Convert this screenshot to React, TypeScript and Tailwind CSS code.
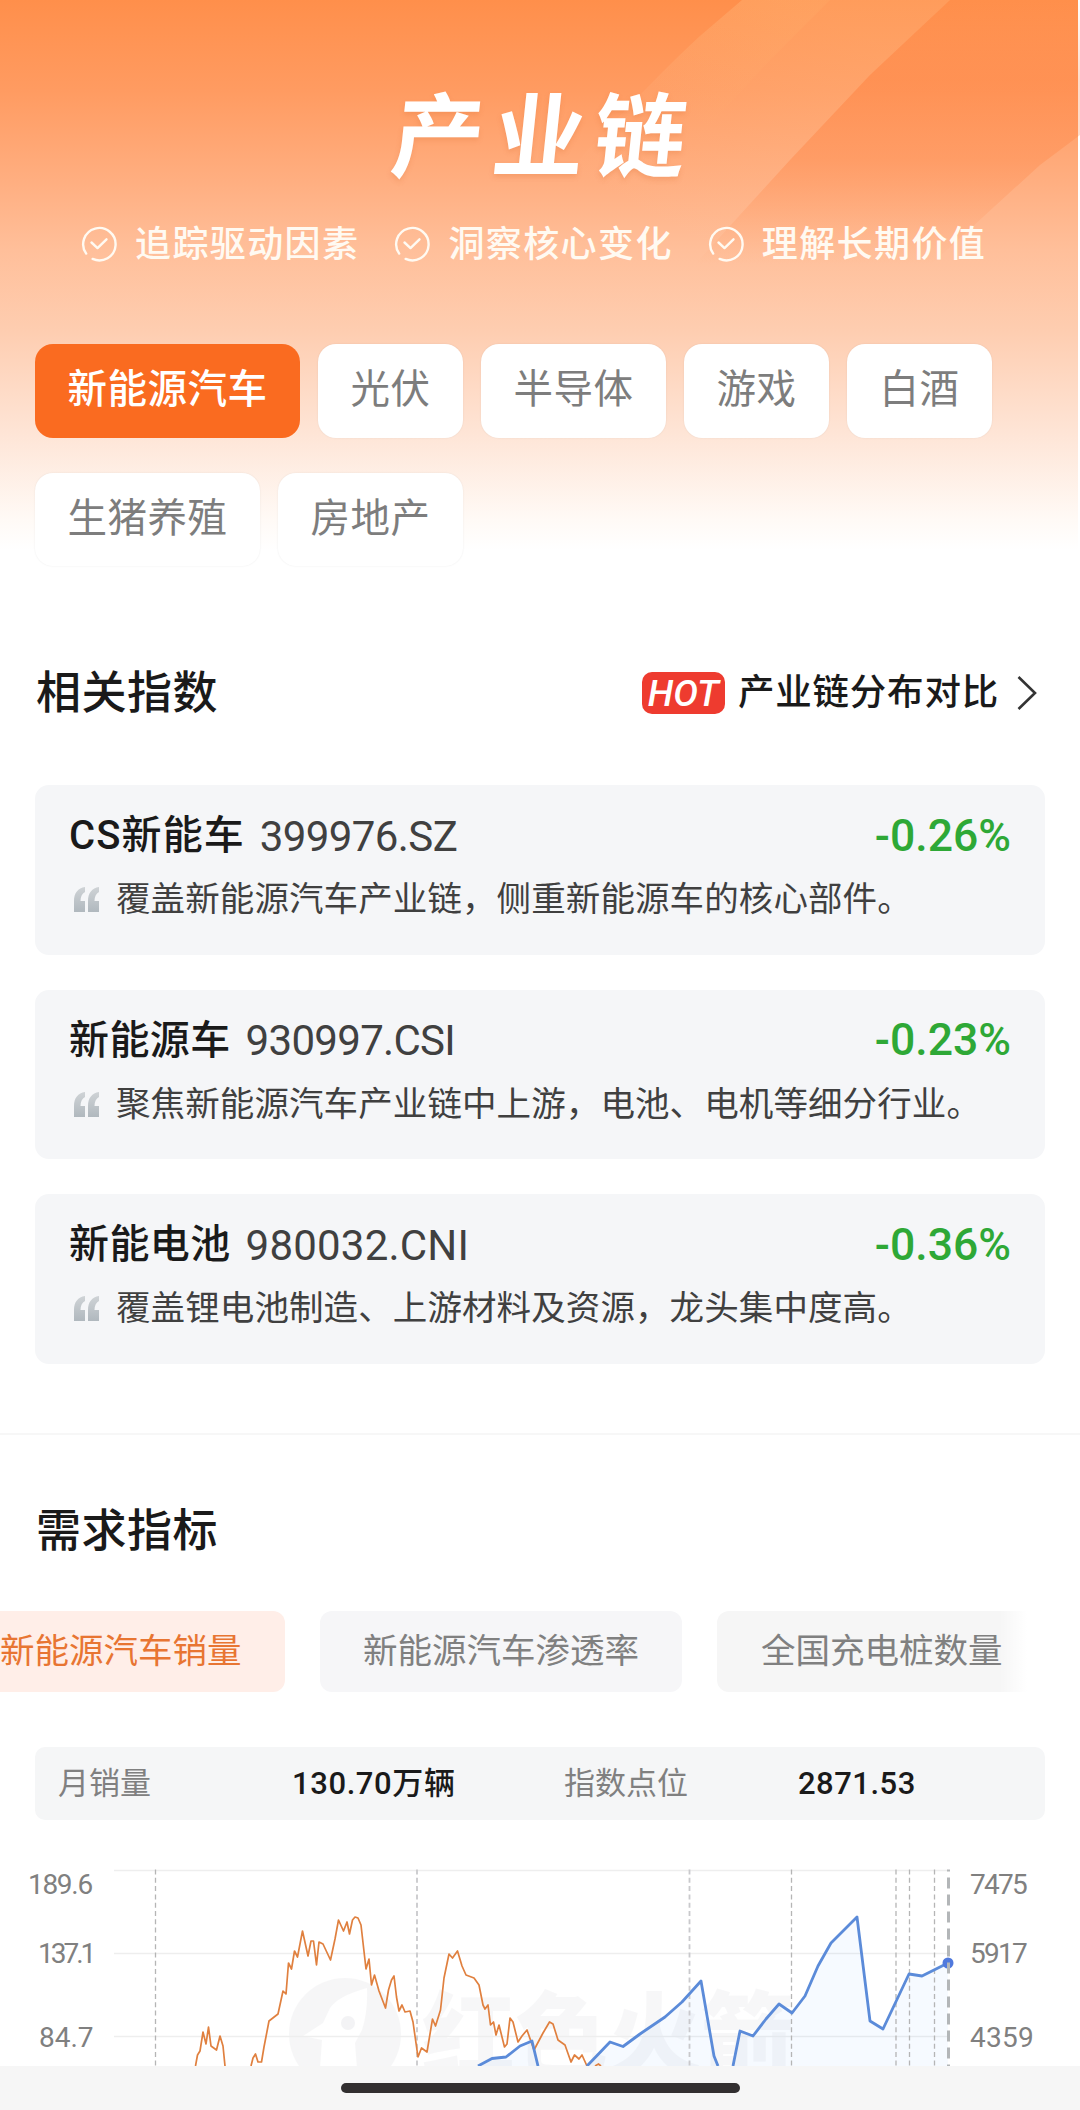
import { ReactNode } from "react";

interface IndexItem {
    name: string,
    code: string,
    change: string,
    desc: string,
    nameClass: string,
    codeClass: string
}

const features = ["追踪驱动因素", "洞察核心变化", "理解长期价值"];

const chains = ["新能源汽车", "光伏", "半导体", "游戏", "白酒", "生猪养殖", "房地产"];

const indexes: IndexItem[] = [
    { name: "CS新能车", code: "399976.SZ", change: "-0.26%", desc: "覆盖新能源汽车产业链，侧重新能源车的核心部件。", nameClass: "tracking-[1.1px]", codeClass: "tracking-[-0.6px]" },
    { name: "新能源车", code: "930997.CSI", change: "-0.23%", desc: "聚焦新能源汽车产业链中上游，电池、电机等细分行业。", nameClass: "tracking-[0.4px]", codeClass: "tracking-[-0.7px]" },
    { name: "新能电池", code: "980032.CNI", change: "-0.36%", desc: "覆盖锂电池制造、上游材料及资源，龙头集中度高。", nameClass: "tracking-[0.4px]", codeClass: "tracking-[0.2px]" },
];

const CheckIcon = () => (
    <svg width="36" height="36" viewBox="0 0 36 36" fill="none" stroke="currentColor" strokeWidth="2.4" strokeLinecap="round" strokeLinejoin="round">
        <path d="M5.2 27.6A16.2 16.2 0 1 1 11.6 32.9" />
        <path d="M10.5 16.5l6 5.6 9-8.8" />
    </svg>
)

const QuoteIcon = () => (
    <svg width="26" height="26" viewBox="0 0 26 26">
        <defs>
            <linearGradient id="quote" x1="0" y1="0" x2="0" y2="1">
                <stop offset="0" stopColor="#cfd3d6" />
                <stop offset="1" stopColor="#b0b8be" />
            </linearGradient>
        </defs>
        <path d="M11 0C4 1 0 6 0 14v11h11V14H6.500C6.500 9.500 8 6.500 11 5z" fill="url(#quote)" />
        <path d="M25 0C18 1 14 6 14 14v11h11V14H20.500C20.500 9.500 22 6.500 25 5z" fill="url(#quote)" />
    </svg>
)

const SectionTitle = ({ children }: { children: ReactNode }) => (
    <h2 className="pl-px text-[45px] leading-[60px] font-medium text-[#1a1a1a] tracking-[0.5px]">{children}</h2>
)

// light beams behind the title
const Beams = () => (
    <svg className="absolute inset-0" width="1080" height="570" viewBox="0 0 1080 570" fill="none">
        <defs>
            <linearGradient id="beam" x1="800" y1="0" x2="670" y2="230" gradientUnits="userSpaceOnUse">
                <stop offset="0" stopColor="#ffc58f" stopOpacity="0.24" />
                <stop offset="1" stopColor="#ffd0b0" stopOpacity="0" />
            </linearGradient>
            <linearGradient id="beamEdge" x1="780" y1="0" x2="690" y2="120" gradientUnits="userSpaceOnUse">
                <stop offset="0" stopColor="#ffb870" stopOpacity="0.16" />
                <stop offset="1" stopColor="#ffb870" stopOpacity="0" />
            </linearGradient>
            <linearGradient id="shade" x1="0" y1="0" x2="0" y2="265" gradientUnits="userSpaceOnUse">
                <stop offset="0" stopColor="#ff7f3c" stopOpacity="0" />
                <stop offset="0.3" stopColor="#ff7a35" stopOpacity="0.26" />
                <stop offset="0.6" stopColor="#ff7a35" stopOpacity="0.28" />
                <stop offset="1" stopColor="#ff7f3c" stopOpacity="0" />
            </linearGradient>
        </defs>
        <path d="M742 0H950L870 75 790 160 690 270H480Q620 110 700 36z" fill="url(#beam)" />
        <path d="M742 0H830L770 60 660 180H550Q640 90 700 36z" fill="url(#beamEdge)" />
        <path d="M950 0H1080V135L1040 165 925 270H690L790 160 870 75z" fill="url(#shade)" />
    </svg>
)

const Chart = () => (
    <svg className="w-full h-[202px]" viewBox="0 1864 1080 202" fill="none">
        <g opacity="0.42">
            <circle cx="345" cy="2034" r="56" fill="#ececee" />
            <path d="M367 1988Q338 1996 330 2008L323 2023 303 2036 322 2040 320 2068H357L355 2043 362 2030Q368 2012 367 1988z" fill="#fff" />
            <circle cx="348" cy="2023" r="7" fill="#e4e4e8" />
            <text x="422" y="2070" fontSize="93" fontWeight="900" fill="#eeeef0">红色火箭</text>
        </g>
        <path d="M114 1870.500H948M114 1953.500H948M114 2036.500H948" stroke="#eeeeee" strokeWidth="1.5" />
        <path d="M478 2066L492 2058 506 2057 520 2046 532 2041 538 2066zM587 2066L610 2042 623 2046.500 640 2034 665 2017 682 2002 701 1981 714 2052 718 2066zM733 2066L740 2030 753 2036 779 2004 792 2013 805 1996 818 1966 831 1943 857 1917 870 2021 883 2029 909 1974 922 1976 948 1963V2066z" fill="#4c9dff" fillOpacity="0.05" />
        <g stroke="#b5b5b5" strokeWidth="1.3" strokeDasharray="5 3.300">
            <path d="M155.500 1869.500V2066M791.500 1869.500V2066M896 1869.500V2066M909.500 1869.500V2066M934.500 1869.500V2066" />
            <path d="M417 1869.500V2066M689.500 1869.500V2066" stroke="#c9c9cc" strokeWidth="1.8" />
        </g>
        <polyline stroke="#e0803f" strokeWidth="1.700" strokeLinejoin="round" points="195.500,2066 197.500,2055 200,2051 203,2032 206,2044 208.500,2027 211,2046 216.500,2050 220,2036 223,2046 225,2066" />
        <polyline stroke="#e0803f" strokeWidth="1.700" strokeLinejoin="round" points="251,2066 253,2058 255.500,2054 258,2062 261.500,2062 264,2047 269,2021 278,2014 283,1991 286,1994 288.500,1963 291.500,1969 294.500,1951 297.500,1957 302.500,1931 308,1956 311,1941 313.500,1941 316.500,1965 319,1942 323,1944 330.500,1960 335,1939 338.500,1920 343.500,1931 347,1922 349.500,1934 352.500,1920 355,1917 358,1918 361,1925 366,1969 369,1959 371.500,1985 374.500,1975 379,1991 385.500,2008 388.500,1990 391.500,1980 394,1976 396.500,1997 399,2011 402,2005 405,2012 410,2011 413,2022 418,2057 421.500,2048 427,2052 432.500,2019 435.500,2026 440.500,2010 444,1978 449,1954 452.500,1958 457.500,1951 462,1966 466,1975 474,1978 479,1985 483,2005 485,2009 488,2005 490.500,2025 493.500,2022 496,2035 499,2025 504.500,2047 507,2044 510,2018 513,2022 518,2042 522,2036 527,2030 534,2050 543,2033 549.500,2022 553,2024 558,2040 565,2045 571,2062 574.500,2055 579,2059 582,2055 587,2066" />
        <polyline stroke="#e0803f" strokeWidth="1.700" points="595,2066 598.500,2064 601,2066" />
        <g stroke="#5b8bd9" strokeWidth="2.800" strokeLinejoin="round">
            <polyline points="478,2066 492,2058.500 506,2057 520,2046 532,2041 538,2066" />
            <polyline points="587,2066 610,2042 623,2046.500 640,2034 665,2017 682,2002 701,1981 714,2056 718,2066" />
            <polyline points="733,2066 740,2031 753,2036 766,2019 779,2004 792,2013 805,1996 818,1966 831,1943 857,1917 870,2021 883,2029 909,1974 922,1976 948,1963" />
        </g>
        <circle cx="948" cy="1963" r="5.500" fill="#5079dd" />
        <path d="M948.500 1869.500V2066" stroke="#b3b6b8" strokeWidth="3" strokeDasharray="11 6" strokeDashoffset="9" />
        <g fontSize="28" fill="#808080">
            <text x="28" y="1894" letterSpacing="-1.3">189.6</text>
            <text x="38" y="1963" letterSpacing="-3">137.1</text>
            <text x="39" y="2047">84.7</text>
            <text x="970" y="1894" letterSpacing="-1.7">7475</text>
            <text x="970" y="1963" letterSpacing="-1.7">5917</text>
            <text x="970" y="2047" letterSpacing="0.3">4359</text>
        </g>
    </svg>
)

const App = () => {
    return (
        <div className="w-[1080px] h-[2110px] overflow-hidden bg-white flex flex-col font-[Roboto,'Noto_Sans_CJK_SC',sans-serif]">
            <header className="relative h-[570px] shrink-0 border-r-2 border-white bg-[linear-gradient(180deg,#ff8f4b_0px,#ff9b61_90px,#ffae80_180px,#ffbf9a_250px,#fecdb0_330px,#fee4d5_430px,#fffaf6_520px,#ffffff_550px)]">
                <Beams />
                <div className="relative">
                    <h1 className="pt-[89px] pl-[15px] h-[220px] text-center text-[92px] leading-[100px] font-bold text-white tracking-[9px] -skew-x-6 [text-shadow:0_3px_5px_rgba(220,110,50,0.25)]">产业链</h1>
                    <div className="flex h-[48px] items-center gap-[35px] pl-[81px] text-[#fffaf2]">
                        {features.map((item) => (
                            <div key={item} className="flex items-center gap-[18px]">
                                <CheckIcon />
                                <span className="pt-[2px] text-[36px] leading-[48px] tracking-[1.4px] font-medium whitespace-nowrap">{item}</span>
                            </div>
                        ))}
                    </div>
                    <div className="mt-[76px] ml-[35px] flex flex-wrap gap-x-[18.500px] gap-y-[35px]">
                        {chains.map((item, i) => (
                            <button key={item} className={`h-[93.500px] pl-[32.500px] pr-[32px] pb-[2px] rounded-[18px] text-[39.500px] tracking-[0.5px] ${i === 0 ? "bg-[#fa6b20] text-white font-medium" : "bg-white text-[#7d7d7d] shadow-[0_0_2px_rgba(0,0,0,0.08)]"}`}>{item}</button>
                        ))}
                    </div>
                </div>
            </header>

            <section className="px-[35px] h-[863px] shrink-0">
                <div className="flex items-center justify-between pt-[94px]">
                    <SectionTitle>相关指数</SectionTitle>
                    <div className="flex items-center text-[#1a1a1a] -mt-[3px]">
                        <span className="w-[83px] h-[42px] rounded-[10px] bg-[#ee3b2f] text-white text-[37px] leading-[43px] italic text-center font-medium">HOT</span>
                        <span className="ml-[13px] text-[36.500px] leading-[60px] tracking-[0.8px] font-medium">产业链分布对比</span>
                        <svg className="ml-[18px] mr-[8px]" width="20" height="34" viewBox="0 0 20 34" fill="none" stroke="#333" strokeWidth="2.6"><path d="M1.500 1l16.500 16-16.500 16" /></svg>
                    </div>
                </div>
                <div className="mt-[61px] flex flex-col gap-[35px]">
                    {indexes.map((item) => (
                        <div key={item.name} className="h-[169.500px] rounded-[14px] bg-[#f5f6f8] px-[34px] pt-[21px]">
                            <div className="flex items-center h-[60px]">
                                <span className={`text-[40px] font-medium text-[#1a1a1a] ${item.nameClass}`}>{item.name}</span>
                                <span className={`ml-[15px] text-[42px] text-[#404040] ${item.codeClass}`}>{item.code}</span>
                                <span className="ml-auto text-[44.500px] font-medium text-[#2ea836]">{item.change}</span>
                            </div>
                            <div className="flex items-center h-[68px] pl-[5px]">
                                <QuoteIcon />
                                <span className="ml-[16px] text-[34.500px] tracking-[0.1px] text-[#404040] whitespace-nowrap">{item.desc}</span>
                            </div>
                        </div>
                    ))}
                </div>
            </section>

            <section className="h-[633px] shrink-0 border-t-2 border-[#f7f7f7]">
                <div className="pl-[35px] pt-[67px]">
                    <SectionTitle>需求指标</SectionTitle>
                </div>
                <div className="relative mt-[49px] w-[1027px] overflow-hidden flex gap-[35px] text-[34.500px] text-[#808080] whitespace-nowrap">
                    <div className="w-[285px] h-[81px] shrink-0 rounded-r-[12px] bg-[#ffeee8] text-[#e87532] leading-[81px]">新能源汽车销量</div>
                    <div className="w-[362px] h-[81px] shrink-0 rounded-[12px] bg-[#f6f6f8] leading-[81px] text-center">新能源汽车渗透率</div>
                    <div className="w-[330px] h-[81px] shrink-0 rounded-[12px] bg-[#f6f6f6] leading-[81px] pl-[44px]">全国充电桩数量</div>
                    <div className="absolute right-0 top-0 w-[28px] h-full bg-linear-to-r from-transparent to-white"></div>
                </div>
                <div className="mx-[35px] mt-[55px] h-[73px] rounded-[10px] bg-[#f5f6f7] flex items-center text-[31px] text-[#808080] leading-[75px]">
                    <span className="w-[257px] pl-[23px]">月销量</span>
                    <span className="w-[272px] font-medium text-[#1a1a1a] tracking-[0.6px]">130.70万辆</span>
                    <span className="w-[234px]">指数点位</span>
                    <span className="font-medium text-[#1a1a1a] tracking-[0.5px]">2871.53</span>
                </div>
                <div className="mt-[44px]">
                    <Chart />
                </div>
            </section>

            <footer className="flex-1 bg-[#f6f6f6] pt-[17px] flex justify-center">
                <div className="w-[399px] h-[10px] rounded-full bg-[#322f30]"></div>
            </footer>
        </div>
    );
}
export default App
